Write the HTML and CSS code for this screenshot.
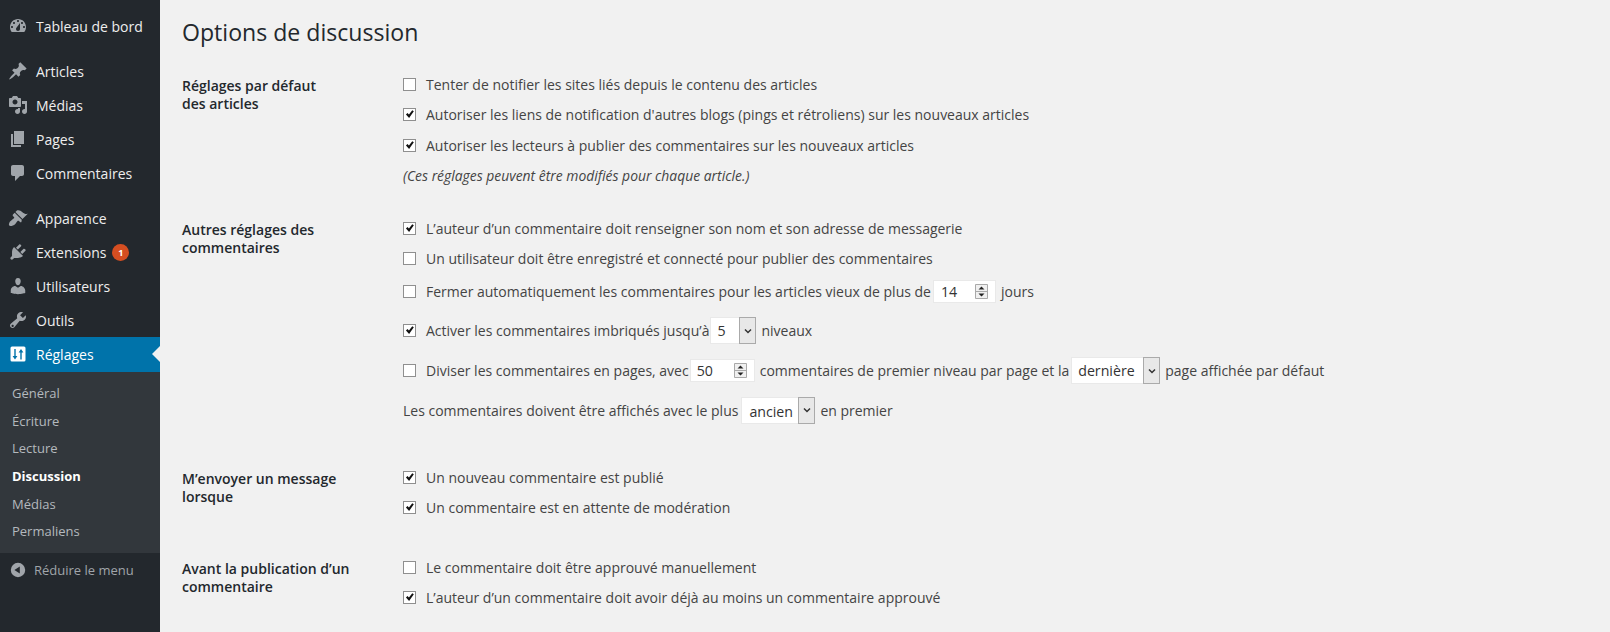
FILE: index.html
```html
<!DOCTYPE html>
<html lang="fr">
<head>
<meta charset="utf-8">
<title>Options de discussion</title>
<link rel="stylesheet" href="styles.css">
</head>
<body>
<svg class="defs" width="0" height="0" aria-hidden="true">
  <symbol id="chk" viewBox="0 0 14 14"><path d="M2.500 7l1.900-1.900 1.900 2L10.500 1.500l2 1.500-6 8.500z"/></symbol>
</svg>
<div class="app">
  <nav class="side">
    <ul class="menu first">
      <li class="item"><svg class="ic" viewBox="0 0 20 20"><path fill-rule="evenodd" d="M3.760 16h12.480c1.100-1.370 1.760-3.110 1.760-5 0-4.420-3.580-8-8-8s-8 3.580-8 8c0 1.890.66 3.630 1.760 5zM10 4c.55 0 1 .45 1 1s-.45 1-1 1-1-.45-1-1 .45-1 1-1zM6 6c.55 0 1 .45 1 1s-.45 1-1 1-1-.45-1-1 .45-1 1-1zm8 0c.55 0 1 .45 1 1s-.45 1-1 1-1-.45-1-1 .45-1 1-1zm-5.370 5.550L12 7v6c0 1.100-.9 2-2 2s-2-.9-2-2c0-.57.24-1.080.63-1.450zM4 10c.55 0 1 .45 1 1s-.45 1-1 1-1-.45-1-1 .45-1 1-1zm12 0c.55 0 1 .45 1 1s-.45 1-1 1-1-.45-1-1 .45-1 1-1z"/></svg><span>Tableau de bord</span></li>
    </ul>
    <ul class="menu">
      <li class="item"><svg class="ic" viewBox="0 0 20 20"><path d="M10.440 3.020l1.820-1.820 6.360 6.350-1.830 1.820c-1.050-.68-2.480-.57-3.410.36l-.75.75c-.92.93-1.040 2.350-.35 3.410l-1.830 1.820-2.410-2.410-2.800 2.790c-.42.42-3.380 2.710-3.800 2.290s1.860-3.390 2.280-3.810l2.790-2.790L4.100 9.360l1.830-1.820c1.050.69 2.480.57 3.400-.36l.75-.75c.93-.92 1.050-2.350.36-3.410z"/></svg><span>Articles</span></li>
      <li class="item"><svg class="ic" viewBox="0 0 20 20"><path fill-rule="evenodd" d="M13 11V4c0-.55-.45-1-1-1h-1.670L9 1H5L3.670 3H2c-.55 0-1 .45-1 1v7c0 .55.45 1 1 1h10c.55 0 1-.45 1-1zM7 4.500c1.380 0 2.500 1.120 2.500 2.500S8.380 9.500 7 9.500 4.500 8.380 4.500 7 5.620 4.500 7 4.500zM14 6h5v10.500c0 1.380-1.120 2.500-2.500 2.500S14 17.880 14 16.500s1.120-2.500 2.500-2.500c.17 0 .34.02.5.05V9h-3V6zm-4 8.050V13h2v3.500c0 1.380-1.120 2.500-2.500 2.500S7 17.880 7 16.500 8.120 14 9.500 14c.17 0 .34.02.5.05z"/></svg><span>Médias</span></li>
      <li class="item"><svg class="ic" viewBox="0 0 20 20"><path d="M6 15V2h10v13H6zm-1 1h8v2H3V5h2v11z"/></svg><span>Pages</span></li>
      <li class="item"><svg class="ic" viewBox="0 0 20 20"><path d="M5 2h9c1.100 0 2 .9 2 2v7c0 1.100-.9 2-2 2h-2l-5 5v-5H5c-1.100 0-2-.9-2-2V4c0-1.100.9-2 2-2z"/></svg><span>Commentaires</span></li>
    </ul>
    <ul class="menu">
      <li class="item"><svg class="ic" viewBox="0 0 20 20"><path d="M14.480 11.060L7.410 3.990l1.500-1.500c.5-.56 2.300-.47 3.510.32 1.210.8 1.430 1.280 2.910 2.100 1.180.64 2.450 1.260 4.450.85zm-.71.71L6.700 4.700 4.930 6.470c-.39.39-.39 1.020 0 1.410l1.060 1.060c.39.39.39 1.030 0 1.420-.6.6-1.430 1.110-2.210 1.690-.35.26-.7.53-1.010.84C1.430 13.230.4 16.680 1.300 17.580c.9.9 4.400-.13 5.730-1.440.3-.31.58-.66.84-1.010.58-.78 1.090-1.610 1.690-2.210.39-.39 1.020-.39 1.410 0l1.060 1.060c.39.39 1.020.39 1.410 0z"/></svg><span>Apparence</span></li>
      <li class="item"><svg class="ic" viewBox="0 0 20 20"><path d="M13.110 4.360L9.870 7.600 8 5.730l3.240-3.240c.35-.34 1.050-.2 1.560.32.52.51.66 1.210.31 1.550zm-8 1.770l.91-1.120 9.010 9.010-1.190.84c-.71.71-2.630 1.160-3.820 1.160H6.140L4.900 17.260c-.59.59-1.540.59-2.120 0-.59-.58-.59-1.530 0-2.120l1.240-1.240v-3.880c0-1.130.4-3.190 1.090-3.890zm7.260 3.970l3.240-3.240c.34-.35 1.040-.21 1.550.31.52.51.66 1.210.31 1.560l-3.240 3.240z"/></svg><span>Extensions</span><b class="badge">1</b></li>
      <li class="item"><svg class="ic" viewBox="0 0 20 20"><path d="M10 9.250c-2.270 0-2.730-3.440-2.730-3.440C7 4.020 7.820 2 9.970 2c2.160 0 2.980 2.020 2.710 3.810 0 0-.41 3.440-2.680 3.440zm0 2.570L12.720 10c2.390 0 4.520 2.330 4.520 4.530v2.490s-3.650 1.130-7.240 1.130c-3.650 0-7.240-1.130-7.240-1.130v-2.490c0-2.250 1.940-4.480 4.470-4.480z"/></svg><span>Utilisateurs</span></li>
      <li class="item"><svg class="ic" viewBox="0 0 20 20"><path fill-rule="evenodd" d="M16.680 9.770c-1.340 1.340-3.300 1.670-4.950.99l-5.410 6.520c-.99.99-2.590.99-3.580 0s-.99-2.590 0-3.570l6.520-5.420c-.68-1.650-.35-3.610.99-4.950 1.280-1.280 3.120-1.620 4.720-1.060l-2.890 2.890 2.820 2.820 2.860-2.860c.53 1.580.18 3.400-1.080 4.640zM3.810 16.740c.45.45 1.180.45 1.630 0 .45-.45.45-1.180 0-1.630-.45-.45-1.180-.45-1.630 0-.45.45-.45 1.180 0 1.630z"/></svg><span>Outils</span></li>
      <li class="item active"><svg class="ic" viewBox="0 0 20 20"><path fill-rule="evenodd" d="M4 2.500h12A1.500 1.500 0 0 1 17.500 4v12a1.500 1.500 0 0 1-1.500 1.500H4A1.500 1.500 0 0 1 2.500 16V4A1.500 1.500 0 0 1 4 2.500zM6.300 5v7H4.600L7 15.500 9.400 12H7.700V5zM12.300 15.500V8.500h-1.700L13 5l2.400 3.500h-1.700v7z"/></svg><span>Réglages</span></li>
    </ul>
    <ul class="sub">
      <li>Général</li>
      <li>Écriture</li>
      <li>Lecture</li>
      <li class="cur">Discussion</li>
      <li>Médias</li>
      <li>Permaliens</li>
    </ul>
    <div class="collapse">
      <svg class="cic" viewBox="0 0 20 20"><path fill-rule="evenodd" d="M10 2a8 8 0 1 1 0 16 8 8 0 0 1 0-16zM12 6l-6 4 6 4z"/></svg>
      <span>Réduire le menu</span>
    </div>
  </nav>
  <main class="main">
    <h1>Options de discussion</h1>

    <section class="sec s1">
      <h2>Réglages par défaut<br>des articles</h2>
      <div class="rows">
        <div class="row"><i class="cb"></i>Tenter de notifier les sites liés depuis le contenu des articles</div>
        <div class="row"><i class="cb"><svg><use href="#chk"/></svg></i>Autoriser les liens de notification d'autres blogs (pings et rétroliens) sur les nouveaux articles</div>
        <div class="row"><i class="cb"><svg><use href="#chk"/></svg></i>Autoriser les lecteurs à publier des commentaires sur les nouveaux articles</div>
        <div class="row note">(Ces réglages peuvent être modifiés pour chaque article.)</div>
      </div>
    </section>

    <section class="sec s2">
      <h2>Autres réglages des<br>commentaires</h2>
      <div class="rows">
        <div class="row"><i class="cb"><svg><use href="#chk"/></svg></i>L’auteur d’un commentaire doit renseigner son nom et son adresse de messagerie</div>
        <div class="row"><i class="cb"></i>Un utilisateur doit être enregistré et connecté pour publier des commentaires</div>
        <div class="row r-num"><i class="cb"></i>Fermer automatiquement les commentaires pour les articles vieux de plus de<span class="num w63">14<svg class="spin" viewBox="0 0 13 15"><path class="sb" d="M.5.500h12v14H.5zM.5 7.500h12"/><path d="M6.500 2.500l3 3h-6zM6.500 12.500l-3-3h6z"/></svg></span><span class="after">jours</span></div>
        <div class="row r-sel"><i class="cb"><svg><use href="#chk"/></svg></i>Activer les commentaires imbriqués jusqu’à<span class="sel w5">5<span class="arr"><svg viewBox="0 0 10 10"><path d="M2 3.500l3 3 3-3" /></svg></span></span><span class="after">niveaux</span></div>
        <div class="row r-sel2"><i class="cb"></i>Diviser les commentaires en pages, avec<span class="num w50">50<svg class="spin" viewBox="0 0 13 15"><path class="sb" d="M.5.500h12v14H.5zM.5 7.500h12"/><path d="M6.500 2.500l3 3h-6zM6.500 12.500l-3-3h6z"/></svg></span><span class="after">commentaires de premier niveau par page et la</span><span class="sel wd">dernière<span class="arr"><svg viewBox="0 0 10 10"><path d="M2 3.500l3 3 3-3" /></svg></span></span><span class="after">page affichée par défaut</span></div>
        <div class="row r-last">Les commentaires doivent être affichés avec le plus<span class="sel wa">ancien<span class="arr"><svg viewBox="0 0 10 10"><path d="M2 3.500l3 3 3-3" /></svg></span></span><span class="after">en premier</span></div>
      </div>
    </section>

    <section class="sec s3">
      <h2>M’envoyer un message<br>lorsque</h2>
      <div class="rows">
        <div class="row"><i class="cb"><svg><use href="#chk"/></svg></i>Un nouveau commentaire est publié</div>
        <div class="row"><i class="cb"><svg><use href="#chk"/></svg></i>Un commentaire est en attente de modération</div>
      </div>
    </section>

    <section class="sec s4">
      <h2>Avant la publication d’un<br>commentaire</h2>
      <div class="rows">
        <div class="row"><i class="cb"></i>Le commentaire doit être approuvé manuellement</div>
        <div class="row"><i class="cb"><svg><use href="#chk"/></svg></i>L’auteur d’un commentaire doit avoir déjà au moins un commentaire approuvé</div>
      </div>
    </section>
  </main>
</div>
</body>
</html>
```
FILE: styles.css
```css
* { box-sizing: border-box; }
html, body { margin: 0; height: 100%; overflow: hidden; }
body { background: #f1f1f1; font-family: "Open Sans", sans-serif; font-size: 14px; color: #444; }
.defs { position: absolute; }
.app { display: flex; height: 632px; }
ul { list-style: none; margin: 0; padding: 0; }

.side { width: 160px; flex: none; background: #23282d; color: #eee; padding-top: 9px; }
.menu { padding-bottom: 11px; }
.menu:nth-of-type(3) { padding-bottom: 0; }
.item { height: 34px; display: flex; align-items: center; padding-left: 8px; }
.item span { margin-left: 8px; }
.ic { width: 20px; height: 20px; fill: #a0a5aa; flex: none; }
.item.active { height: 35px; padding-bottom: 1px; background: #0073aa; color: #fff; position: relative; }
.item.active .ic { fill: #fff; }
.item.active::after { content: ""; position: absolute; right: 0; top: 9px; border: 8px solid transparent; border-right-color: #f1f1f1; border-left-width: 0; }
.badge { margin-left: 6px; width: 17px; height: 17px; border-radius: 50%; background: #d54e21; color: #fff; font-size: 9px; font-weight: 700; display: flex; align-items: center; justify-content: center; }

.sub { background: #32373c; padding: 8px 0 7px; height: 181px; }
.sub li { height: 27.700px; line-height: 27.700px; padding-left: 12px; font-size: 13px; color: #b4b9be; }
.sub li.cur { color: #fff; font-weight: 700; }
.collapse { display: flex; align-items: center; height: 34px; padding-left: 9px; font-size: 13px; color: #a0a5aa; }
.collapse span { margin-left: 7px; }
.cic { width: 18px; height: 18px; fill: #a0a5aa; }

.main { flex: 1; padding: 0 0 0 22px; min-width: 0; }
h1 { margin: 0; font-size: 23.100px; font-weight: 400; color: #23282d; line-height: 32px; padding-top: 16px; height: 69px; }
.sec { display: grid; grid-template-columns: 221px 1fr; }
h2 { margin: 0; font-size: 14px; line-height: 18px; font-weight: 600; color: #23282d; padding-top: 8px; }
.rows { display: flex; flex-direction: column; }
.row { display: flex; align-items: center; height: 30.500px; white-space: pre; }
.cb { width: 13px; height: 13px; margin-right: 10px; background: #fff; border: 1px solid #8f8f8f; flex: none; display: flex; }
.cb svg { width: 11px; height: 11px; fill: #111; }
.note { font-style: italic; font-size: 13.900px; }
.s2 { padding-top: 22px; }
.s3 { padding-top: 31px; }
.s4 { padding-top: 29px; }

.r-num { height: 35px; }
.r-sel { height: 43px; }
.r-sel2 { height: 37px; }
.r-last { height: 42px; }

.num, .sel { display: inline-flex; align-items: center; background: #fff; border: 1px solid #e9e9e9; color: #333; position: relative; padding-left: 6px; flex: none; font-size: 14.200px; }
.num { height: 23px; }
.sel { height: 27px; }
.after { margin-left: 5px; }
.w63 { width: 63px; margin-left: 2px; padding-left: 7px; }
.w50 { width: 65px; margin-left: 1px; padding-left: 6px; }
.w5 { width: 46px; margin-left: 1px; padding-left: 6px; }
.wd { width: 89px; margin-left: 2px; }
.wa { width: 74px; margin-left: 3px; padding-left: 7px; padding-top: 3px; }
.spin { width: 13px; height: 15px; position: absolute; right: 7px; top: 3px; fill: #222; }
.spin .sb { fill: #f0f0f0; stroke: #a9a9a9; }
.arr { position: absolute; right: -1px; top: -1px; bottom: -1px; width: 17px; background: #e8e8e8; border: 1px solid #aaa; display: flex; align-items: center; justify-content: center; }
.arr svg { width: 10px; height: 10px; fill: none; stroke: #333; stroke-width: 1.500; }
```
